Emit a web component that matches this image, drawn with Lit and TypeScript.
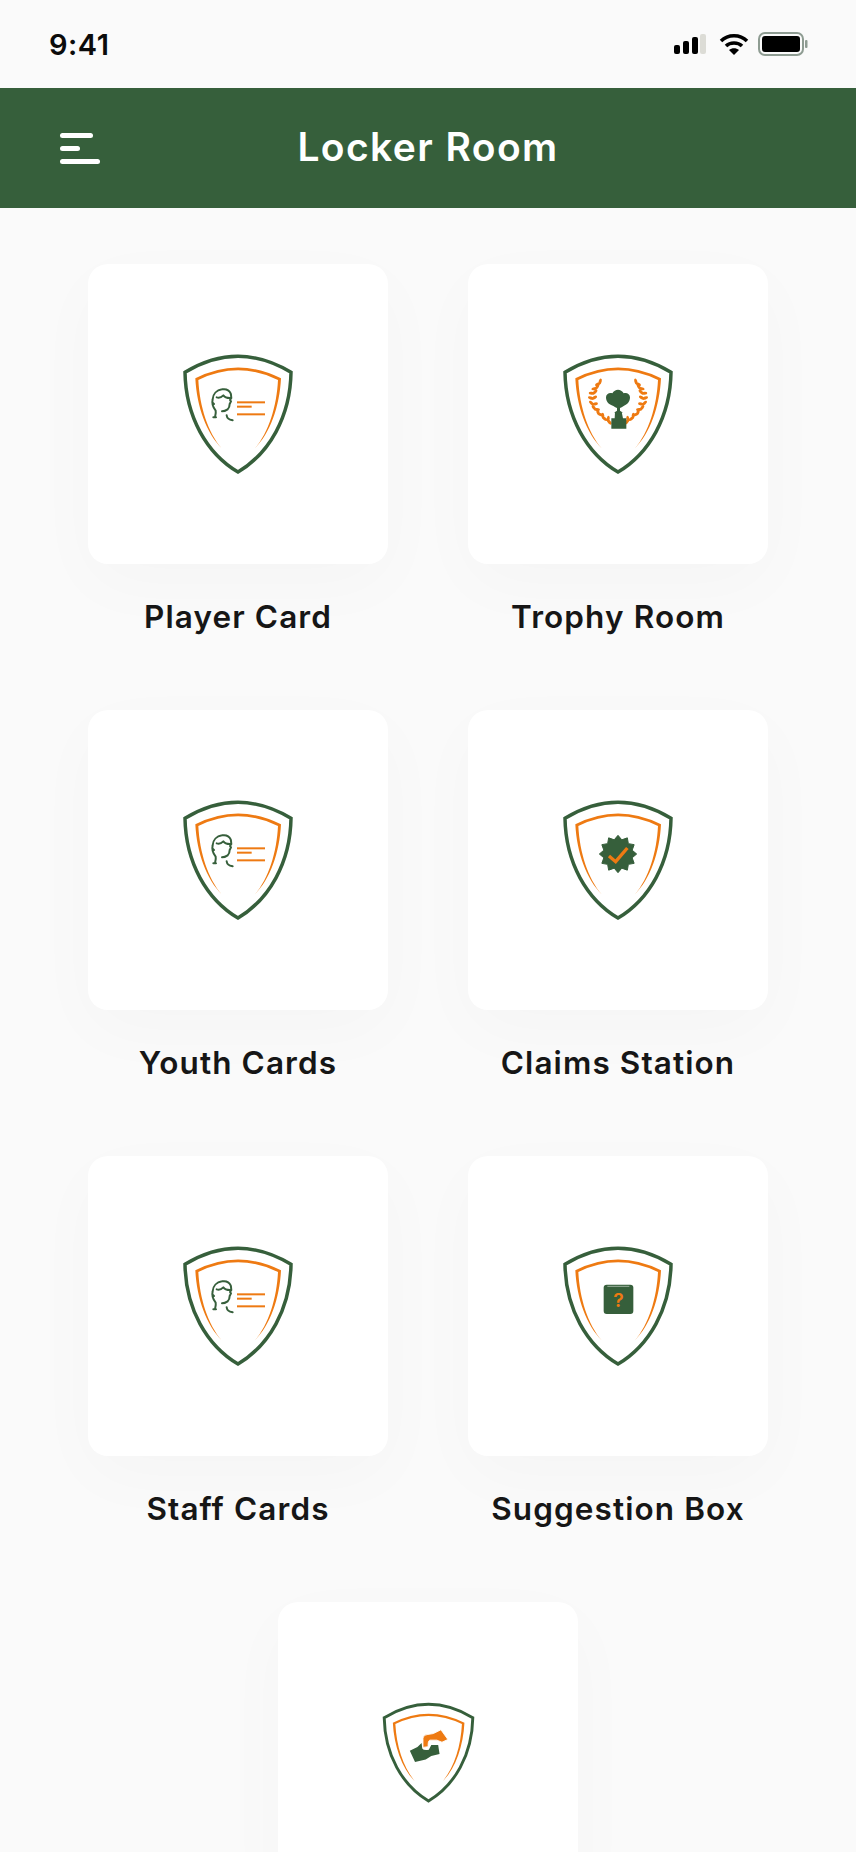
import { LitElement, html, css, svg } from 'lit';
import { customElement, property } from 'lit/decorators.js';

const GREEN = '#365f3b';
const ORANGE = '#ee7a12';

// all emblem art uses a 420 box, centred on x=204
const head = svg`
  <path d="M135 232c2-8 3-16 2-20-8-10-12-22-9-34 1-16 12-28 28-30 12-2 22 3 26 12 2 6 1 10 2 14l-4 6 3 4-4 8c0 6-2 12-6 16-6 4-10 6-17 6M128 188l4 4M170 226c1 8 4 12 18 15M138 232h-8M140 172c6 2 14 0 20-6 4 6 12 8 20 8"
    fill="none" stroke="${GREEN}" stroke-width="6" stroke-linecap="round" stroke-linejoin="round" />
  <rect x="201" y="184" width="84" height="6" fill="${ORANGE}" />
  <rect x="201" y="197" width="44" height="6" fill="${ORANGE}" />
  <rect x="201" y="220" width="84" height="6" fill="${ORANGE}" />
`;

const laurel = (side: number) => {
  const leaves = [
    [149, 130, -50], [139, 145, -35], [131, 160, -20], [128, 176, -5],
    [129, 193, 15], [135, 208, 30], [146, 222, 45], [159, 233, 60], [174, 242, 72],
  ];
  return leaves.map(([x, y, r]) => {
    const px = side < 0 ? x : 408 - x;
    const rot = side < 0 ? r : -r;
    return svg`
      <ellipse cx="${px - 6}" cy="${y}" rx="9" ry="4.500" fill="${ORANGE}" transform="rotate(${rot + 25} ${px} ${y})" />
      <ellipse cx="${px + 6}" cy="${y}" rx="9" ry="4.500" fill="${ORANGE}" transform="rotate(${rot - 25} ${px} ${y})" />`;
  });
};

const trophy = svg`
  ${laurel(-1)}
  ${laurel(1)}
  <path d="M168 172c0-10 10-15 19-12 8-14 26-14 34 0 9-3 19 2 19 12 0 13-8 22-19 26-4 3-8 5-11 6v8c3 2 6 3 8 6h-25c2-3 5-4 8-6v-8c-3-1-7-3-11-6-14-4-22-13-22-26z" fill="${GREEN}" />
  <path d="M195 216h20l4 19h10v31h-45v-31h10z" fill="${GREEN}" />
`;

const starPoints = () => {
  const pts: string[] = [];
  for (let i = 0; i < 24; i++) {
    const a = (i * Math.PI) / 12;
    const r = i % 2 ? 44 : 56;
    pts.push(`${204 + r * Math.sin(a)},${204 - r * Math.cos(a)}`);
  }
  return pts.join(' ');
};

const badge = svg`
  <polygon points="${starPoints()}" fill="${GREEN}" stroke="${GREEN}" stroke-width="3" stroke-linejoin="round" />
  <path d="M177 210l20 17 35-41" fill="none" stroke="${ORANGE}" stroke-width="10" />
`;

const box = svg`
  <rect x="161" y="158" width="89" height="88" rx="9" fill="${GREEN}" />
  <path d="M172 163h66" stroke="#cfd8cf" stroke-width="2" />
  <text x="205.500" y="226" text-anchor="middle" font-family="Inter, sans-serif" font-size="58" font-weight="600" fill="${ORANGE}">?</text>
`;

// drawn on the 3x crop of the small emblem, scaled back up to the 420 box
const hands = svg`
  <g transform="translate(204 35) scale(1.24) translate(-204 -69)">
    <path d="M150 215L172 204L184 192L186 208Q190 215 205 212L212 198L232 198L236 224L212 230L196 240L165 247Z" fill="${GREEN}" />
    <path d="M188 205V178Q190 168 200 168L218 165L240 154L260 182L243 190L228 184L208 184Q202 186 203 203Z" fill="${ORANGE}" stroke="#fff" stroke-width="2.500" />
  </g>
`;

const art: Record<string, unknown> = { head, trophy, badge, box, hands };

@customElement('locker-emblem')
export class LockerEmblem extends LitElement {
  @property() kind = 'head';

  @property({ type: Number }) size = 140;

  static styles = css`
    :host {
      display: block;
    }
    svg {
      display: block;
    }
  `;

  render() {
    return html`
      <svg width=${this.size} height=${this.size} viewBox="-6 12 420 420">
        <path
          d="M45 97Q204 1 363 97C361 230 298 340 204 396C110 340 47 230 45 97Z"
          fill="none"
          stroke=${GREEN}
          stroke-width="10.500"
          stroke-linejoin="miter"
        />
        <path
          d="M155 325C110 280 80 200 76 115Q204 50 333 115C329 200 300 280 255 325C296 277 320 200 324 120Q204 62 85 120C89 200 114 277 155 325Z"
          fill=${ORANGE}
        />
        ${art[this.kind]}
      </svg>
    `;
  }
}

const TILES = [
  { label: 'Player Card', kind: 'head', size: 140 },
  { label: 'Trophy Room', kind: 'trophy', size: 140 },
  { label: 'Youth Cards', kind: 'head', size: 140 },
  { label: 'Claims Station', kind: 'badge', size: 140 },
  { label: 'Staff Cards', kind: 'head', size: 140 },
  { label: 'Suggestion Box', kind: 'box', size: 140 },
  { label: '', kind: 'hands', size: 117 },
];

@customElement('app-root')
export class AppRoot extends LitElement {
  static styles = css`
    :host {
      display: block;
      height: 1852px;
      overflow: hidden;
      background: #fafafa;
      font-family: Inter, 'Liberation Sans', sans-serif;
    }
    .status {
      height: 88px;
      box-sizing: border-box;
      padding: 0 48px 0 49px;
      display: flex;
      align-items: center;
      justify-content: space-between;
    }
    .time {
      font-size: 29px;
      font-weight: 600;
      color: #0b0b0b;
      letter-spacing: 0.5px;
    }
    .status-icons {
      display: flex;
      align-items: center;
      gap: 9px;
    }
    .status-icons svg {
      display: block;
    }
    .signal {
      margin-right: 4px;
    }
    .nav {
      height: 120px;
      background: #365f3b;
      display: grid;
      grid-template-columns: 1fr auto 1fr;
      align-items: center;
    }
    .menu {
      padding-left: 60px;
      display: flex;
      flex-direction: column;
      gap: 8px;
    }
    .menu span {
      display: block;
      height: 5px;
      border-radius: 3px;
      background: #fff;
    }
    .title {
      font-size: 39px;
      line-height: 46px;
      margin-top: -2px;
      font-weight: 600;
      color: #fff;
      letter-spacing: 1.4px;
    }
    .grid {
      display: grid;
      grid-template-columns: 300px 300px;
      column-gap: 80px;
      row-gap: 72px;
      justify-content: center;
      padding-top: 56px;
    }
    .tile {
      display: flex;
      flex-direction: column;
      align-items: center;
    }
    .tile.last {
      grid-column: 1 / span 2;
    }
    .card {
      width: 300px;
      height: 300px;
      background: #fff;
      border-radius: 20px;
      box-shadow: 0 20px 70px rgba(0, 0, 0, 0.025);
      display: flex;
      align-items: center;
      justify-content: center;
    }
    .label {
      margin-top: 32px;
      font-size: 31.500px;
      line-height: 42px;
      font-weight: 600;
      color: #161616;
      letter-spacing: 1.1px;
      white-space: nowrap;
    }
  `;

  render() {
    return html`
      <div class="status">
        <span class="time">9:41</span>
        <div class="status-icons">
          <svg class="signal" width="32" height="20" viewBox="0 0 32 20">
            <rect x="0" y="11" width="6" height="9" rx="2" fill="#000" />
            <rect x="9" y="7" width="6" height="13" rx="2" fill="#000" />
            <rect x="18" y="3" width="6" height="17" rx="2" fill="#000" />
            <rect x="26" y="0" width="6" height="20" rx="2" fill="#dcdcd6" />
          </svg>
          <svg width="30" height="22" viewBox="0 0 30 22">
            <path d="M2 8C9 1 21 1 28 8" fill="none" stroke="#000" stroke-width="3.500" />
            <path d="M7 13C11 9 19 9 23 13" fill="none" stroke="#000" stroke-width="3.500" />
            <path d="M15 22l-5-5c3-2.500 7-2.500 10 0z" fill="#000" />
          </svg>
          <svg width="50" height="24" viewBox="0 0 50 24">
            <rect x="1" y="1" width="44" height="22" rx="6" fill="none" stroke="#8e9c92" stroke-width="2" />
            <rect x="4" y="4" width="38" height="16" rx="3" fill="#000" />
            <rect x="47" y="8" width="2.500" height="8" rx="1" fill="#8e9c92" />
          </svg>
        </div>
      </div>
      <div class="nav">
        <div class="menu">
          <span style="width:33px"></span>
          <span style="width:20px"></span>
          <span style="width:40px"></span>
        </div>
        <span class="title">Locker Room</span>
      </div>
      <div class="grid">
        ${TILES.map(
          (t, i) => html`
            <div class="tile ${i === TILES.length - 1 ? 'last' : ''}">
              <div class="card">
                <locker-emblem kind=${t.kind} size=${t.size}></locker-emblem>
              </div>
              ${t.label ? html`<div class="label">${t.label}</div>` : ''}
            </div>
          `,
        )}
      </div>
    `;
  }
}
